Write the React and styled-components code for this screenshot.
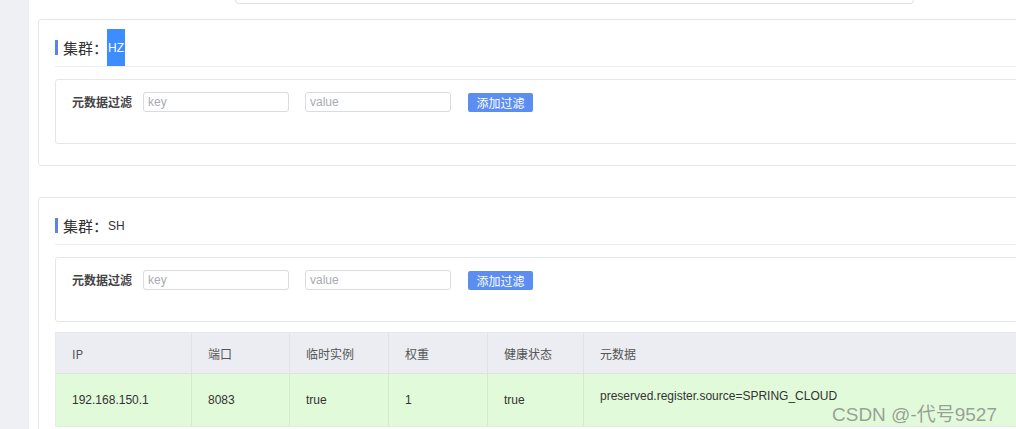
import React from "react";
import styled, { createGlobalStyle } from "styled-components";

const Global = createGlobalStyle`
  html, body { margin: 0; padding: 0; background: #fff; }
  body {
    font-family: "Liberation Sans", "Noto Sans CJK SC", sans-serif;
    color: #333;
    overflow: hidden;
  }
  * { box-sizing: border-box; }
`;

const Page = styled.div`
  display: flex;
  width: 1016px;
  height: 429px;
  overflow: hidden;
  position: relative;
`;

const Sidebar = styled.div`
  flex: 0 0 29px;
  background: #eef0f4;
`;

const Main = styled.div`
  flex: 1;
  padding-left: 9px;
  display: flex;
  flex-direction: column;
  min-width: 0;
`;

const TopStrip = styled.div`
  flex-shrink: 0;
  height: 4px;
  overflow: hidden;
  display: flex;
  align-items: flex-end;
  padding-left: 197px;
`;

const TopInput = styled.div`
  flex: 0 0 679px;
  height: 30px;
  border: 1px solid #dcdfe6;
  border-radius: 4px;
`;

const Card = styled.section`
  width: 1000px;
  flex-shrink: 0;
  margin-top: ${(p) => p.$gap}px;
  border: 1px solid #e4e6ea;
  border-radius: 3px;
  padding: 9px 0 21px 16px;
  background: #fff;
`;

const TitleRow = styled.div`
  height: 38px;
  display: flex;
  align-items: center;
  border-bottom: 1px solid #ebedf0;
`;

const TitleBar = styled.span`
  width: 3px;
  height: 15px;
  background: #5b85e0;
  margin-right: 5px;
`;

const TitleText = styled.span`
  font-family: "Noto Sans CJK SC", sans-serif;
  font-size: 15px;
  color: #333;
`;

const ClusterName = styled.span`
  align-self: stretch;
  display: flex;
  align-items: center;
  font-size: 12px;
  padding: 0 1px;
  margin-left: -1px;
  color: ${(p) => (p.$selected ? "#fff" : "#333")};
  background: ${(p) => (p.$selected ? "#3c8dff" : "transparent")};
`;

const FilterBox = styled.div`
  margin-top: 12px;
  height: 65px;
  border: 1px solid #e4e6ea;
  border-radius: 3px;
  padding: 12px 0 0 16px;
  display: flex;
  align-items: flex-start;
`;

const FilterLabel = styled.span`
  font-family: "Noto Sans CJK SC", sans-serif;
  font-size: 12px;
  font-weight: 700;
  color: #444;
  line-height: 20px;
  margin-right: 11px;
`;

const TextInput = styled.div`
  width: 146px;
  height: 20px;
  border: 1px solid #d8dbe0;
  border-radius: 3px;
  padding-left: 4px;
  font-size: 12px;
  line-height: 18px;
  color: #a8abb2;
  margin-right: ${(p) => p.$mr}px;
`;

const AddButton = styled.button`
  width: 65px;
  height: 19px;
  margin-top: 1px;
  border: none;
  border-radius: 2px;
  background: #5b8ef0;
  color: #fff;
  font-family: "Noto Sans CJK SC", sans-serif;
  font-size: 12px;
  line-height: 19px;
  padding: 0;
`;

const Table = styled.div`
  margin-top: 10px;
  border: 1px solid #e6e8eb;
  display: grid;
  grid-template-columns: 136px 98px 99px 99px 96px 1fr;
`;

const HeadCell = styled.div`
  height: 41px;
  background: #ebedf2;
  border-right: 1px solid #dfe2e7;
  border-bottom: 1px solid #dfe2e7;
  padding-left: 16px;
  display: flex;
  align-items: center;
  font-family: "Noto Sans CJK SC", sans-serif;
  font-size: 12px;
  color: #555;
`;

const BodyCell = styled.div`
  height: 52px;
  background: #e1fad9;
  border-right: 1px solid #d6e8d0;
  padding-left: 16px;
  display: flex;
  align-items: ${(p) => (p.$top ? "flex-start" : "center")};
  padding-top: ${(p) => (p.$top ? "15px" : "0")};
  font-size: 12px;
  color: #333;
`;

const Watermark = styled.div`
  position: absolute;
  left: 832px;
  top: 399px;
  font-family: "Liberation Sans", "Noto Sans CJK SC", sans-serif;
  font-size: 19px;
  color: rgba(120, 120, 120, 0.7);
  white-space: nowrap;
`;

const FilterRow = () => (
  <FilterBox>
    <FilterLabel>元数据过滤</FilterLabel>
    <TextInput $mr={16}>key</TextInput>
    <TextInput $mr={17}>value</TextInput>
    <AddButton>添加过滤</AddButton>
  </FilterBox>
);

const Title = ({ name, selected }) => (
  <TitleRow>
    <TitleBar />
    <TitleText>集群：</TitleText>
    <ClusterName $selected={selected}>{name}</ClusterName>
  </TitleRow>
);

const headers = ["IP", "端口", "临时实例", "权重", "健康状态", "元数据"];
const row = ["192.168.150.1", "8083", "true", "1", "true", "preserved.register.source=SPRING_CLOUD"];

export default function App() {
  return (
    <>
      <Global />
      <Page>
        <Sidebar />
        <Main>
          <TopStrip>
            <TopInput />
          </TopStrip>
          <Card $gap={15}>
            <Title name="HZ" selected />
            <FilterRow />
          </Card>
          <Card $gap={31}>
            <Title name="SH" />
            <FilterRow />
            <Table>
              {headers.map((h) => (
                <HeadCell key={h}>{h}</HeadCell>
              ))}
              {row.map((c, i) => (
                <BodyCell key={i} $top={i === 5}>{c}</BodyCell>
              ))}
            </Table>
          </Card>
        </Main>
        <Watermark>CSDN @-代号9527</Watermark>
      </Page>
    </>
  );
}
